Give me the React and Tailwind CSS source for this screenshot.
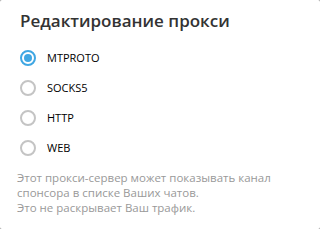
const OPTIONS = ['MTPROTO', 'SOCKS5', 'HTTP', 'WEB'];

function Radio({ checked }) {
  return (
    <span
      className={
        'flex h-4 w-4 shrink-0 items-center justify-center rounded-full border-2 ' +
        (checked ? 'border-[#40a7e3]' : 'border-[#c4c4c4]')
      }
    >
      {checked && <span className="h-2 w-2 rounded-full bg-[#40a7e3]" />}
    </span>
  );
}

export default function App() {
  const selected = 'MTPROTO';
  return (
    <div className="h-[229px] w-[320px] bg-[#9a9a9a]" style={{ fontFamily: '"Open Sans", sans-serif' }}>
      <div className="h-full w-full overflow-hidden rounded-[2px] bg-white">
        <h1 className="pl-5 pt-[9px] text-[17px] font-semibold leading-[24px] text-[#333]">
          Редактирование прокси
        </h1>
        <div className="mt-[17px] flex flex-col gap-[14px] pl-5">
          {OPTIONS.map((o) => (
            <div key={o} className="flex h-4 items-center gap-[11px]">
              <Radio checked={o === selected} />
              <span className="text-[11px] leading-4 text-black">{o}</span>
            </div>
          ))}
        </div>
        <p className="mt-[14px] pl-[17px] pr-4 text-[11.5px] leading-[15px] text-[#999]">
          Этот прокси-сервер может показывать канал
          <br />
          спонсора в списке Ваших чатов.
          <br />
          Это не раскрывает Ваш трафик.
        </p>
      </div>
    </div>
  );
}
